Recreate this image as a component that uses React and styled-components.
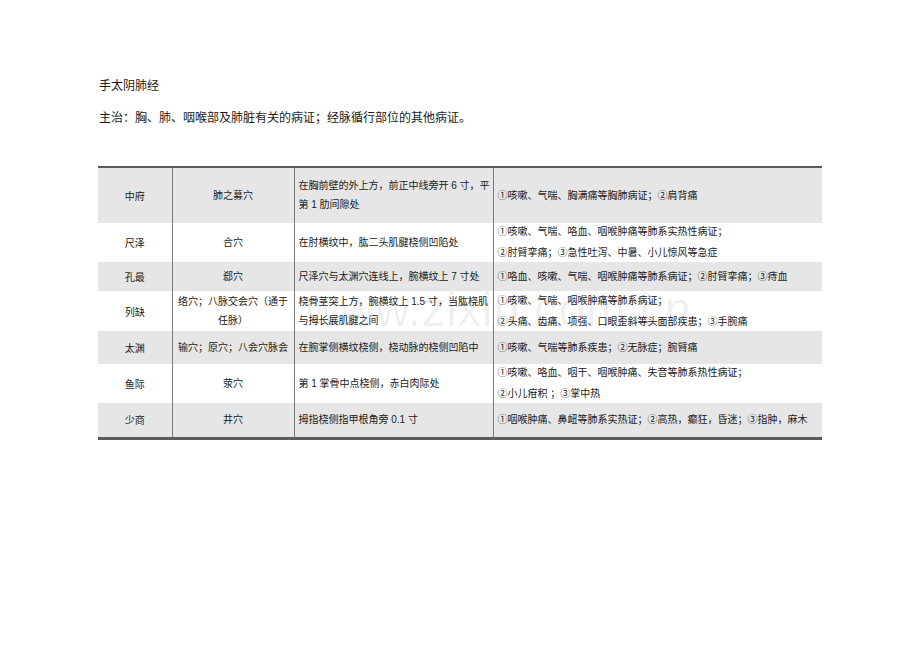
import { createGlobalStyle, styled } from 'styled-components';

const GlobalStyle = createGlobalStyle`
  body {
    margin: 0;
    background: #ffffff;
    font-family: "Liberation Sans", "Noto Sans CJK SC", sans-serif;
    color: #1a1a1a;
  }
`;

const Page = styled.div`
  position: relative;
  width: 920px;
  height: 651px;
  padding: 78px 98px 0 98px;
  box-sizing: border-box;
`;

const Title = styled.div`
  font-size: 12px;
  line-height: 16px;
  padding-left: 1px;
`;

const Summary = styled.div`
  font-size: 12px;
  line-height: 16px;
  margin-top: 16px;
  padding-left: 1px;
`;

const Table = styled.table`
  margin-top: 40px;
  width: 724px;
  border-collapse: collapse;
  table-layout: fixed;
  font-size: 10px;
  border-top: 2px solid #5c5c5c;
  border-bottom: 3px solid #5c5c5c;
`;

const Row = styled.tr`
  height: ${(p) => p.$h}px;
  background: ${(p) => (p.$shade ? '#e6e6e6' : '#ffffff')};
  & + & td {
    border-top: 1px solid #7a7a7a;
  }
`;

const Cell = styled.td`
  padding: 0 ${(p) => (p.$center ? '2px' : '4px')};
  text-align: ${(p) => (p.$center ? 'center' : 'left')};
  vertical-align: middle;
  white-space: nowrap;
  overflow: hidden;
  & + & {
    border-left: 1px solid #7a7a7a;
  }
`;

const Line = styled.div`
  line-height: ${(p) => p.$lh}px;
  & + & {
    margin-top: ${(p) => p.$gap}px;
  }
`;

const Watermark = styled.div`
  position: absolute;
  left: 305px;
  top: 282px;
  font-family: "Liberation Sans", sans-serif;
  font-size: 48px;
  letter-spacing: 0.5px;
  color: rgba(0, 0, 0, 0.06);
  pointer-events: none;
`;

const rows = [
  {
    name: '中府',
    kind: ['肺之募穴'],
    loc: ['在胸前壁的外上方，前正中线旁开 6 寸，平', '第 1 肋间隙处'],
    use: ['①咳嗽、气喘、胸满痛等胸肺病证；②肩背痛'],
    h: 56,
  },
  {
    name: '尺泽',
    kind: ['合穴'],
    loc: ['在肘横纹中，肱二头肌腱桡侧凹陷处'],
    use: ['①咳嗽、气喘、咯血、咽喉肿痛等肺系实热性病证；', '②肘臂挛痛；③急性吐泻、中暑、小儿惊风等急症'],
    h: 39,
  },
  {
    name: '孔最',
    kind: ['郄穴'],
    loc: ['尺泽穴与太渊穴连线上，腕横纹上 7 寸处'],
    use: ['①咯血、咳嗽、气喘、咽喉肿痛等肺系病证；②肘臂挛痛；③痔血'],
    h: 29,
  },
  {
    name: '列缺',
    kind: ['络穴；八脉交会穴（通于', '任脉）'],
    loc: ['桡骨茎突上方，腕横纹上 1.5 寸，当肱桡肌', '与拇长展肌腱之间'],
    use: ['①咳嗽、气喘、咽喉肿痛等肺系病证；', '②头痛、齿痛、项强、口眼歪斜等头面部疾患；③手腕痛'],
    h: 40,
  },
  {
    name: '太渊',
    kind: ['输穴；原穴；八会穴脉会'],
    loc: ['在腕掌侧横纹桡侧，桡动脉的桡侧凹陷中'],
    use: ['①咳嗽、气喘等肺系疾患；②无脉症；腕臂痛'],
    h: 33,
  },
  {
    name: '鱼际',
    kind: ['荥穴'],
    loc: ['第 1 掌骨中点桡侧，赤白肉际处'],
    use: ['①咳嗽、咯血、咽干、咽喉肿痛、失音等肺系热性病证；', '②小儿疳积 ；③掌中热'],
    h: 39,
  },
  {
    name: '少商',
    kind: ['井穴'],
    loc: ['拇指桡侧指甲根角旁 0.1 寸'],
    use: ['①咽喉肿痛、鼻衄等肺系实热证；②高热，癫狂，昏迷；③指肿，麻木'],
    h: 35,
  },
];

function Lines({ items, lh = 16, gap = 0 }) {
  return items.map((t, i) => (
    <Line key={i} $lh={lh} $gap={gap}>
      {t}
    </Line>
  ));
}

export default function App() {
  return (
    <Page>
      <GlobalStyle />
      <Title>手太阴肺经</Title>
      <Summary>主治：胸、肺、咽喉部及肺脏有关的病证；经脉循行部位的其他病证。</Summary>
      <Table>
        <colgroup>
          <col style={{ width: 74 }} />
          <col style={{ width: 122 }} />
          <col style={{ width: 199 }} />
          <col style={{ width: 329 }} />
        </colgroup>
        <tbody>
          {rows.map((r, i) => (
            <Row key={r.name} $h={r.h} $shade={i % 2 === 0}>
              <Cell $center>{r.name}</Cell>
              <Cell $center>
                <Lines items={r.kind} />
              </Cell>
              <Cell>
                <Lines items={r.loc} />
              </Cell>
              <Cell>
                <Lines items={r.use} lh={18} gap={3} />
              </Cell>
            </Row>
          ))}
        </tbody>
      </Table>
      <Watermark>www.zixin.com.cn</Watermark>
    </Page>
  );
}
